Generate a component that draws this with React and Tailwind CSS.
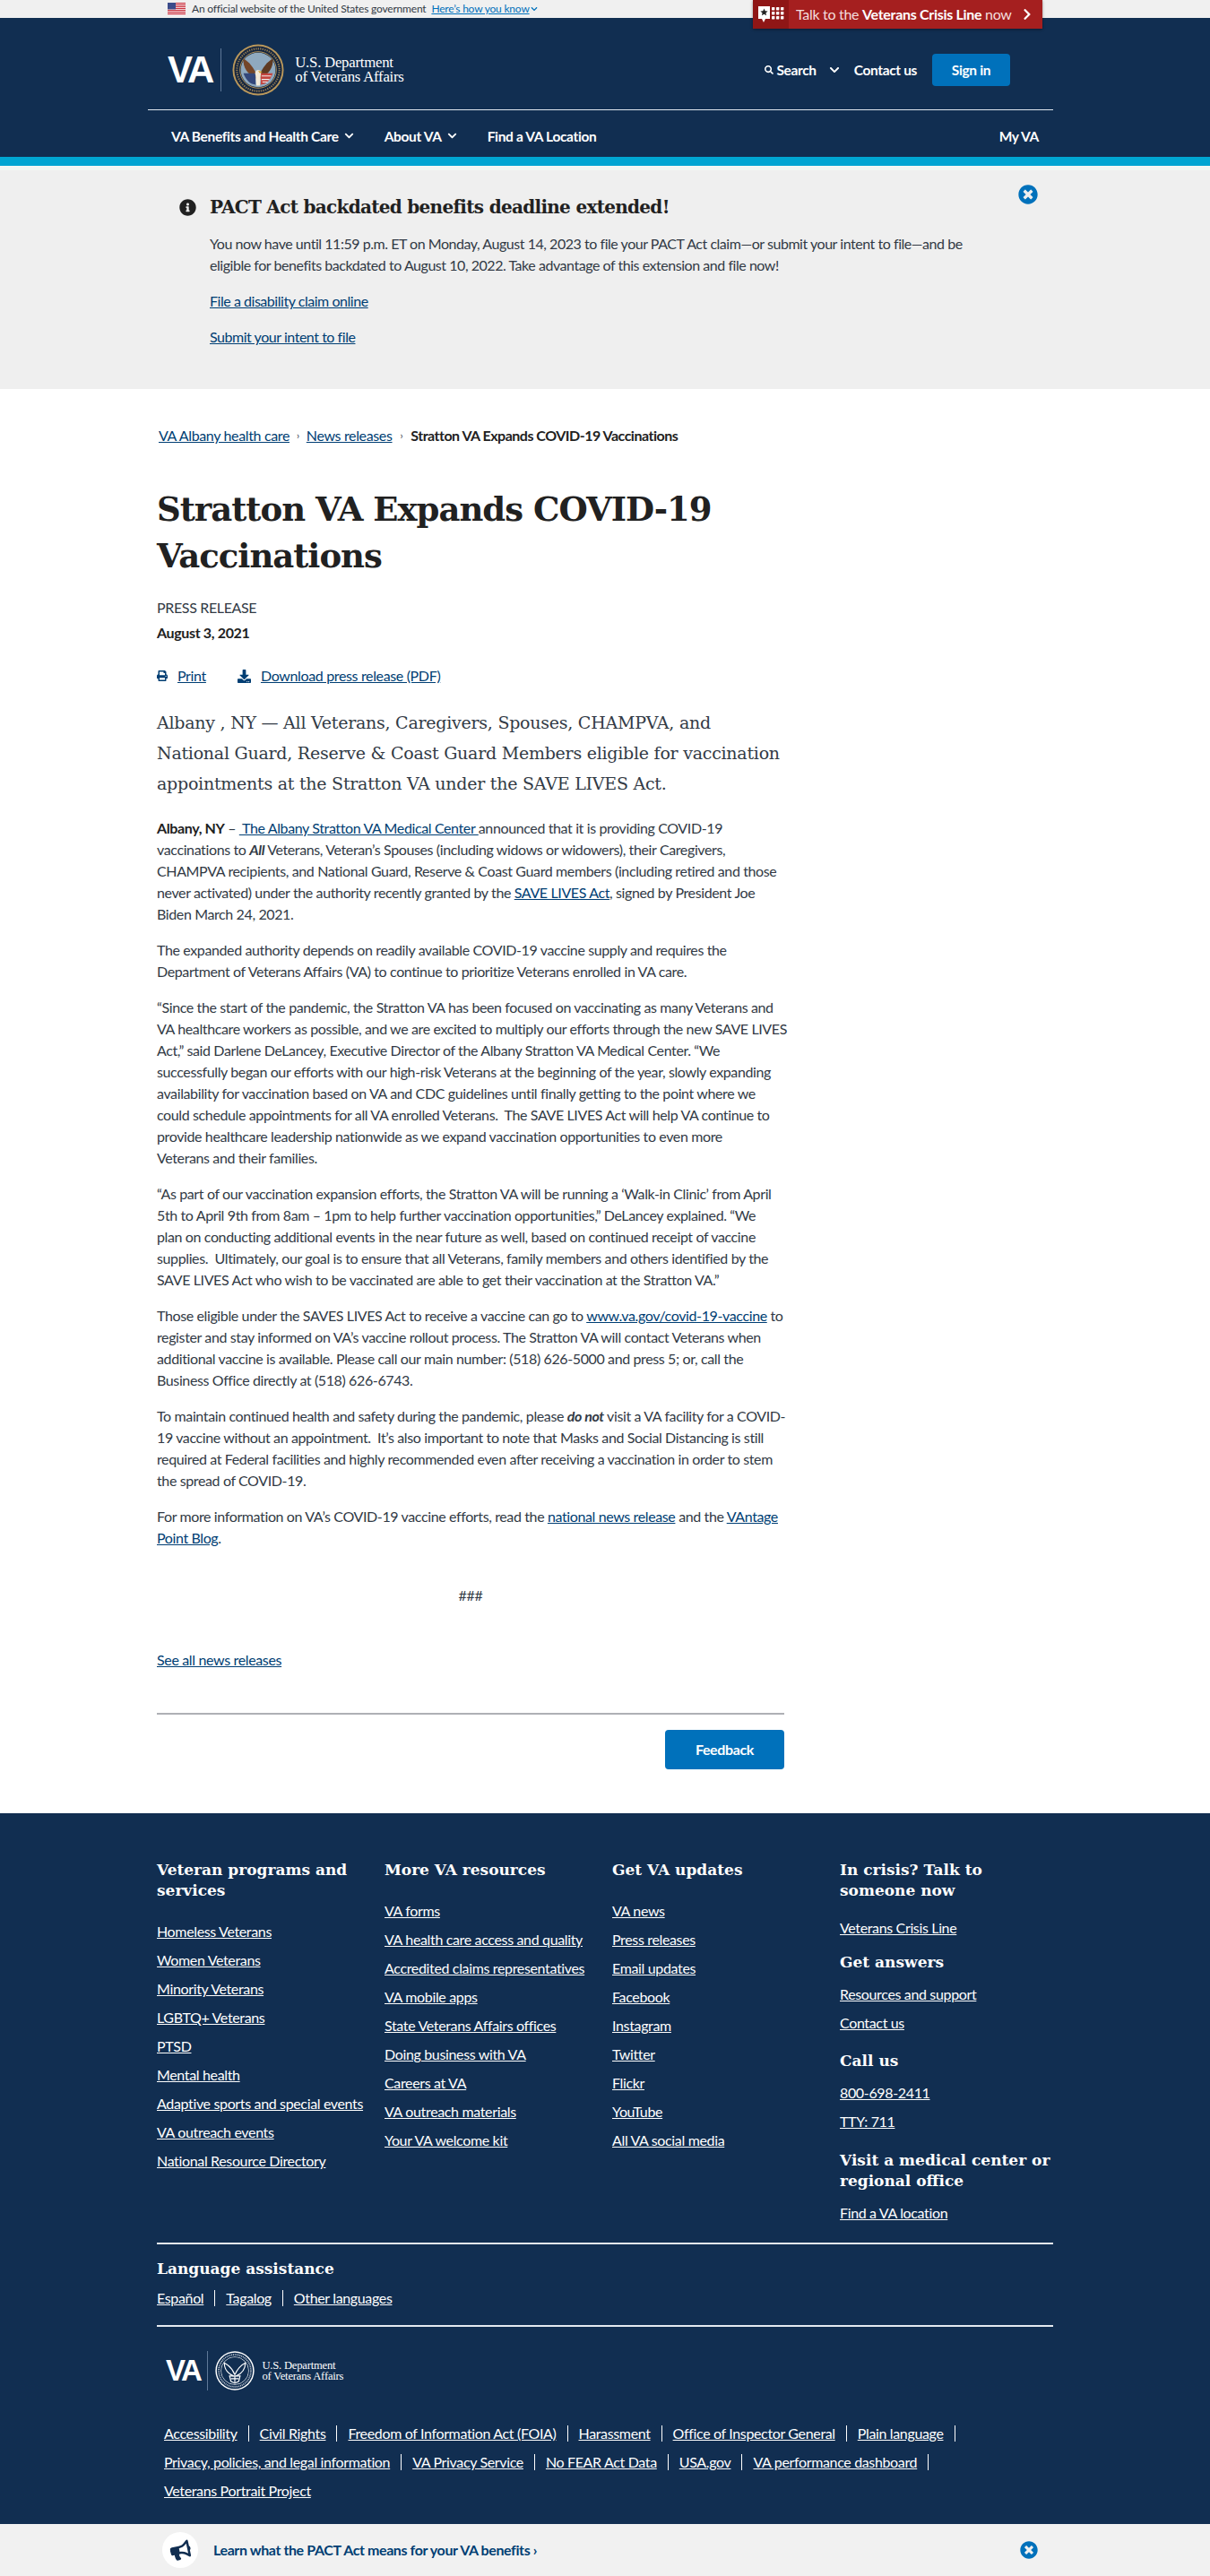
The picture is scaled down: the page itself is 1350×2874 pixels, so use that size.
import React from "react";
import { FaInfoCircle, FaTimesCircle, FaPrint, FaDownload, FaBullhorn, FaChevronRight, FaSearch, FaChevronDown } from "react-icons/fa";

function Flag() {
  return (
    <svg width="20" height="14" viewBox="0 0 20 14" className="shrink-0">
      <rect width="20" height="14" fill="#fff" />
      {[0, 2, 4, 6, 8, 10, 12].map((y) => (
        <rect key={y} y={y} width="20" height="1.2" fill="#c8313e" />
      ))}
      <rect width="9" height="7.4" fill="#3b4b8a" />
    </svg>
  );
}

function CrisisIcon() {
  return (
    <svg width="30" height="22" viewBox="0 0 30 22">
      <path d="M1 2h13v14H9l-2 4-2-4H1z" fill="#fff" />
      <path d="M7.5 4.5l1.2 2.7 2.9.3-2.2 1.9.7 2.9-2.6-1.5-2.6 1.5.7-2.9-2.2-1.9 2.9-.3z" fill="#222" />
      {[3, 8, 13].map((y) =>
        [16, 21, 26].map((x) => <rect key={x + "-" + y} x={x} y={y} width="3.4" height="3.4" rx="0.6" fill="#fff" />)
      )}
    </svg>
  );
}

function Seal({ size, mono }) {
  const dark = mono ? "#112e51" : "#14253f";
  const ring = mono ? "#ffffff" : "#b9975b";
  return (
    <svg width={size} height={size} viewBox="0 0 60 60" className="shrink-0">
      <circle cx="30" cy="30" r="29.5" fill={ring} />
      <circle cx="30" cy="30" r="27.5" fill={dark} />
      <circle cx="30" cy="30" r="21" fill="none" stroke={ring} strokeWidth="1" />
      <circle cx="30" cy="30" r="24.5" fill="none" stroke={ring} strokeWidth="2.2" strokeDasharray="1.4 1.2" opacity="0.75" />
      <circle cx="30" cy="30" r="20" fill={mono ? "#112e51" : "#8fa9bf"} />
      {mono ? (
        <g fill="none" stroke="#fff" strokeWidth="1.6">
          <path d="M30 36C26 27 20 21 14 18c0 9 5 16 14 20M30 36c4-9 10-15 16-18 0 9-5 16-14 20" />
          <path d="M22 38h16l-2 8-6 3-6-3z" />
          <path d="M30 38v10M24 42h12" />
        </g>
      ) : (
        <g>
          <path d="M29 37C25 27 19 20 13 17c-1 10 5 18 15 23z" fill="#74462a" />
          <path d="M31 37c4-10 10-17 16-20 1 10-5 18-15 23z" fill="#5f3a22" />
          <path d="M13 34h14v13c-6 0-11-5-14-13z" fill="#33477a" />
          <path d="M33 34h14c-3 8-8 13-14 13z" fill="#c4453f" />
          <path d="M34 37h11M34 41h9M35 44h6" stroke="#eee" strokeWidth="1.2" />
          <path d="M30 30c3 0 4 3 3 6l-1 12h-4l-1-12c-1-3 0-6 3-6z" fill="#f3ead8" />
          <path d="M30 31l5 1-3 2z" fill="#d9a53a" />
        </g>
      )}
    </svg>
  );
}

function Logo({ footer }) {
  return (
    <div className="flex items-center">
      <span
        className={
          footer
            ? "text-white font-bold [font-family:'Liberation_Sans',sans-serif] text-[33px] leading-[36px] tracking-[-2.5px]"
            : "text-white font-bold [font-family:'Liberation_Sans',sans-serif] text-[42px] leading-[44px] tracking-[-3px]"
        }
      >
        VA
      </span>
      <div className={footer ? "w-px h-[44px] bg-[#5f7898] ml-[8px] mr-[8px]" : "w-px h-[48px] bg-[#5f7898] ml-[10px] mr-[12px]"} />
      <Seal size={footer ? 44 : 58} mono={footer} />
      <div
        className={
          footer
            ? "ml-[8px] text-white [font-family:'Liberation_Serif',serif] text-[12.6px] leading-[12px] tracking-[-0.2px]"
            : "ml-[12px] text-white [font-family:'Liberation_Serif',serif] text-[16.8px] leading-[16px] tracking-[-0.25px]"
        }
      >
        U.S. Department
        <br />
        of Veterans Affairs
      </div>
    </div>
  );
}

const link = "text-[#003e73] underline";
const slab = "[font-family:'DejaVu_Serif',serif]";

function FootHead({ children, className = "" }) {
  return <h2 className={`${slab} font-bold text-white text-[17px] leading-[23px] tracking-[0px] ${className}`}>{children}</h2>;
}

function FootLinks({ items, className = "" }) {
  return (
    <ul className={`flex flex-col gap-2 ${className}`}>
      {items.map((t) => (
        <li key={t} className="h-6">
          <a className="text-white underline">{t}</a>
        </li>
      ))}
    </ul>
  );
}

const col1 = ["Homeless Veterans", "Women Veterans", "Minority Veterans", "LGBTQ+ Veterans", "PTSD", "Mental health", "Adaptive sports and special events", "VA outreach events", "National Resource Directory"];
const col2 = ["VA forms", "VA health care access and quality", "Accredited claims representatives", "VA mobile apps", "State Veterans Affairs offices", "Doing business with VA", "Careers at VA", "VA outreach materials", "Your VA welcome kit"];
const col3 = ["VA news", "Press releases", "Email updates", "Facebook", "Instagram", "Twitter", "Flickr", "YouTube", "All VA social media"];
const legal = [
  ["Accessibility", "Civil Rights", "Freedom of Information Act (FOIA)", "Harassment", "Office of Inspector General", "Plain language"],
  ["Privacy, policies, and legal information", "VA Privacy Service", "No FEAR Act Data", "USA.gov", "VA performance dashboard"],
];

export default function App() {
  return (
    <div className="w-[1350px] bg-white text-[#323a45] [font-family:Lato,sans-serif] text-[16px] leading-6 tracking-[-0.35px]">
      {/* Official banner */}
      <div className="h-5 bg-[#f0f0f0] relative">
        <div className="w-[1000px] ml-[187px] h-5 flex items-center text-[12px] leading-4 tracking-[-0.2px]">
          <Flag />
          <span className="ml-[7px]">An official website of the United States government</span>
          <a className="ml-[6px] text-[#0071bb] underline">Here’s how you know</a>
          <FaChevronDown className="ml-[1px] text-[#0071bb] text-[8px]" />
        </div>
        <div className="absolute left-[840px] top-0 w-[323px] h-8 bg-[#a51f1f] flex items-center text-white text-[16px] shadow-[0_1px_3px_rgba(0,0,0,0.4)] z-10">
          <div className="w-10 h-8 bg-[#8f1616] flex items-center justify-center shrink-0">
            <CrisisIcon />
          </div>
          <span className="ml-2 tracking-[-0.3px] text-[#f4dede]">
            Talk to the <b className="text-white">Veterans Crisis Line</b> now
          </span>
          <FaChevronRight className="absolute right-[10px] top-[9px] text-[14px]" />
        </div>
      </div>

      {/* Header */}
      <header className="bg-[#112e51] h-[155px] text-white">
        <div className="w-[1010px] ml-[165px]">
          <div className="h-[103px] border-b border-[#dfe7ee] flex items-center justify-between pl-[22px] pr-[48px] pt-[14px]">
            <Logo />
            <div className="flex items-center font-bold text-[15.5px]">
              <FaSearch className="text-[10px]" />
              <span className="ml-[5px] -translate-x-[2px]">Search</span>
              <FaChevronDown className="ml-[12px] text-[12px]" />
              <span className="ml-[16px]">Contact us</span>
              <a className="ml-[17px] w-[87px] h-9 rounded bg-[#0071bb] flex items-center justify-center">Sign in</a>
            </div>
          </div>
          <nav className="h-[49px] flex items-center pl-[26px] pr-[16px] pt-[8px] font-bold text-[15.5px]">
            <span>VA Benefits and Health Care</span>
            <FaChevronDown className="ml-[6px] text-[11px]" />
            <span className="ml-[34px]">About VA</span>
            <FaChevronDown className="ml-[6px] text-[11px]" />
            <span className="ml-[34px]">Find a VA Location</span>
            <span className="ml-auto">My VA</span>
          </nav>
        </div>
      </header>
      <div className="h-[10px] bg-[#00a6d2]" />
      <div className="h-[5px] bg-[#f1f8f4]" />

      {/* Alert */}
      <section className="bg-[#efefef] h-[244px] relative pt-[29px] pl-[200px]">
        <div className="flex items-center h-6">
          <FaInfoCircle className="text-[19px] text-[#212121]" />
          <h2 className={`${slab} ml-[15px] font-bold text-[20px] leading-6 text-[#212121] tracking-[-0.7px]`}>PACT Act backdated benefits deadline extended!</h2>
        </div>
        <div className="ml-[34px] mt-[17px] tracking-[-0.46px]">
          <p>
            You now have until 11:59 p.m. ET on Monday, August 14, 2023 to file your PACT Act claim—or submit your intent to file—and be
            <br />
            eligible for benefits backdated to August 10, 2022. Take advantage of this extension and file now!
          </p>
          <p className="mt-4">
            <a className={link}>File a disability claim online</a>
          </p>
          <p className="mt-4">
            <a className={link}>Submit your intent to file</a>
          </p>
        </div>
        <FaTimesCircle className="absolute left-[1136px] top-[16px] text-[22px] text-[#0071bb]" />
      </section>

      {/* Main */}
      <main className="w-[700px] ml-[175px]">
        <div className="pt-[40px] flex items-center h-[64px]">
          <a className={`${link} ml-[2px]`}>VA Albany health care</a>
          <span className="mx-[8px] text-[11px]">›</span>
          <a className={link}>News releases</a>
          <span className="mx-[9px] text-[11px]">›</span>
          <b className="text-[#212121] tracking-[-0.5px]">Stratton VA Expands COVID-19 Vaccinations</b>
        </div>
        <h1 className={`${slab} mt-[44px] font-bold text-[37px] leading-[52px] text-[#212121] tracking-[-1px]`}>
          Stratton VA Expands COVID-19
          <br />
          Vaccinations
        </h1>
        <div className="mt-[20px]">PRESS RELEASE</div>
        <div className="mt-1 font-bold text-[#212121]">August 3, 2021</div>
        <div className="mt-6 flex items-center h-6">
          <FaPrint className="text-[12px] text-[#003e73]" />
          <a className={`${link} ml-[11px]`}>Print</a>
          <FaDownload className="ml-[35px] text-[15px] text-[#003e73]" />
          <a className={`${link} ml-[11px]`}>Download press release (PDF)</a>
        </div>
        <p className={`${slab} mt-[23px] text-[19px] leading-[34px] tracking-[-0.25px] whitespace-nowrap`}>
          Albany , NY — All Veterans, Caregivers, Spouses, CHAMPVA, and
          <br />
          National Guard, Reserve &amp; Coast Guard Members eligible for vaccination
          <br />
          appointments at the Stratton VA under the SAVE LIVES Act.
        </p>

        <div className="mt-[21px] flex flex-col gap-4 whitespace-nowrap tracking-[-0.38px]">
          <p>
            <b className="text-[#212121]">Albany, NY</b> – <a className={link}>&nbsp;The Albany Stratton VA Medical Center&nbsp;</a>announced that it is providing COVID-19
            <br />
            vaccinations to <b><i>All</i></b> Veterans, Veteran’s Spouses (including widows or widowers), their Caregivers,
            <br />
            CHAMPVA recipients, and National Guard, Reserve &amp; Coast Guard members (including retired and those
            <br />
            never activated) under the authority recently granted by the <a className={link}>SAVE LIVES Act</a>, signed by President Joe
            <br />
            Biden March 24, 2021.
          </p>
          <p>
            The expanded authority depends on readily available COVID-19 vaccine supply and requires the
            <br />
            Department of Veterans Affairs (VA) to continue to prioritize Veterans enrolled in VA care.
          </p>
          <p>
            “Since the start of the pandemic, the Stratton VA has been focused on vaccinating as many Veterans and
            <br />
            VA healthcare workers as possible, and we are excited to multiply our efforts through the new SAVE LIVES
            <br />
            Act,” said Darlene DeLancey, Executive Director of the Albany Stratton VA Medical Center. “We
            <br />
            successfully began our efforts with our high-risk Veterans at the beginning of the year, slowly expanding
            <br />
            availability for vaccination based on VA and CDC guidelines until finally getting to the point where we
            <br />
            could schedule appointments for all VA enrolled Veterans.&nbsp; The SAVE LIVES Act will help VA continue to
            <br />
            provide healthcare leadership nationwide as we expand vaccination opportunities to even more
            <br />
            Veterans and their families.
          </p>
          <p>
            “As part of our vaccination expansion efforts, the Stratton VA will be running a ‘Walk-in Clinic’ from April
            <br />
            5th to April 9th from 8am – 1pm to help further vaccination opportunities,” DeLancey explained. “We
            <br />
            plan on conducting additional events in the near future as well, based on continued receipt of vaccine
            <br />
            supplies.&nbsp; Ultimately, our goal is to ensure that all Veterans, family members and others identified by the
            <br />
            SAVE LIVES Act who wish to be vaccinated are able to get their vaccination at the Stratton VA.”
          </p>
          <p>
            Those eligible under the SAVES LIVES Act to receive a vaccine can go to <a className={link}>www.va.gov/covid-19-vaccine</a> to
            <br />
            register and stay informed on VA’s vaccine rollout process. The Stratton VA will contact Veterans when
            <br />
            additional vaccine is available. Please call our main number: (518) 626-5000 and press 5; or, call the
            <br />
            Business Office directly at (518) 626-6743.
          </p>
          <p>
            To maintain continued health and safety during the pandemic, please <b><i>do not</i></b> visit a VA facility for a COVID-
            <br />
            19 vaccine without an appointment.&nbsp; It’s also important to note that Masks and Social Distancing is still
            <br />
            required at Federal facilities and highly recommended even after receiving a vaccination in order to stem
            <br />
            the spread of COVID-19.
          </p>
          <p>
            For more information on VA’s COVID-19 vaccine efforts, read the <a className={link}>national news release</a> and the <a className={link}>VAntage</a>
            <br />
            <a className={link}>Point Blog</a>.
          </p>
        </div>

        <p className="mt-10 text-center">###</p>
        <p className="mt-12">
          <a className={link}>See all news releases</a>
        </p>
        <div className="mt-[47px] h-[2px] bg-[#aeb0b5]" />
        <div className="mt-[17px] mb-[49px] flex justify-end">
          <a className="w-[133px] h-11 rounded bg-[#0071bb] text-white font-bold flex items-center justify-center">Feedback</a>
        </div>
      </main>

      {/* Footer */}
      <footer className="bg-[#112e51] text-white h-[793px] pt-[52px]">
        <div className="w-[1000px] ml-[175px]">
          <div className="grid grid-cols-[254px_254px_254px_238px] h-[427px]">
            <div>
              <FootHead>Veteran programs and<br />services</FootHead>
              <FootLinks items={col1} className="mt-[22px]" />
            </div>
            <div>
              <FootHead>More VA resources</FootHead>
              <FootLinks items={col2} className="mt-[22px]" />
            </div>
            <div>
              <FootHead>Get VA updates</FootHead>
              <FootLinks items={col3} className="mt-[22px]" />
            </div>
            <div>
              <FootHead>In crisis? Talk to<br />someone now</FootHead>
              <FootLinks items={["Veterans Crisis Line"]} className="mt-[18px]" />
              <FootHead className="mt-[15px]">Get answers</FootHead>
              <FootLinks items={["Resources and support", "Contact us"]} className="mt-[12px]" />
              <FootHead className="mt-[19px]">Call us</FootHead>
              <FootLinks items={["800-698-2411", "TTY: 711"]} className="mt-[12px]" />
              <FootHead className="mt-[20px] tracking-[-0.4px]">Visit a medical center or<br />regional office</FootHead>
              <FootLinks items={["Find a VA location"]} className="mt-[12px]" />
            </div>
          </div>
          <div className="h-[2px] bg-[#e4eaf0]" />
          <FootHead className="mt-[16px]">Language assistance</FootHead>
          <div className="mt-[9px] flex items-center h-6">
            <a className="text-white underline pr-[12px] border-r border-white leading-[18px]">Español</a>
            <a className="text-white underline px-[12px] border-r border-white leading-[18px]">Tagalog</a>
            <a className="text-white underline pl-[12px] leading-[18px]">Other languages</a>
          </div>
          <div className="mt-[18px] h-[2px] bg-[#e4eaf0]" />
          <div className="mt-[27px] ml-[10px]">
            <Logo footer />
          </div>
          <div className="mt-[36px] ml-[8px] flex flex-col gap-2">
            {legal.map((row, i) => (
              <div key={i} className="flex items-center h-6">
                {row.map((t) => (
                  <a key={t} className="pr-[12px] mr-[12px] border-r border-white leading-[18px]">
                    <span className="underline">{t}</span>
                  </a>
                ))}
              </div>
            ))}
            <div className="h-6">
              <a className="underline">Veterans Portrait Project</a>
            </div>
          </div>
        </div>
      </footer>

      {/* Bottom promo */}
      <div className="h-[58px] bg-[#f1f1f1] relative pl-[181px] flex items-center">
        <div className="w-10 h-10 rounded-full bg-white flex items-center justify-center">
          <FaBullhorn className="text-[23px] text-[#112e51] -rotate-12" />
        </div>
        <a className="ml-[17px] font-bold text-[#003e73] tracking-[-0.4px]">Learn what the PACT Act means for your VA benefits ›</a>
        <FaTimesCircle className="absolute left-[1138px] top-[19px] text-[20px] text-[#0071bb]" />
      </div>
    </div>
  );
}
